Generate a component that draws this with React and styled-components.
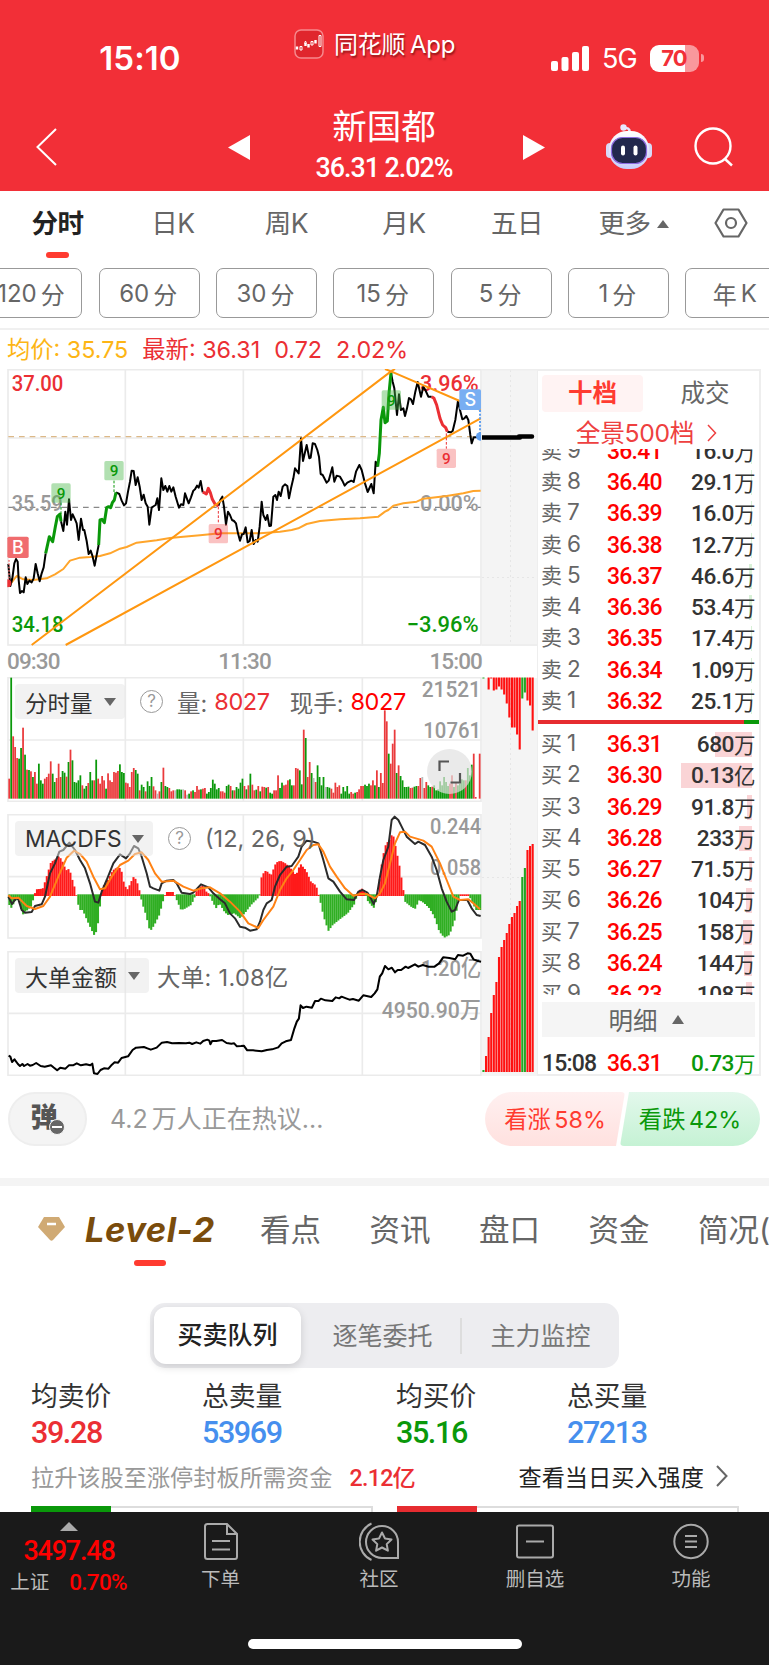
import React from 'react';
import styled, { createGlobalStyle } from 'styled-components';

const GlobalStyle = createGlobalStyle`
    body {
        margin: 0;
        background: #fff;
    }
    * {
        box-sizing: border-box;
    }
`

const ui = `Inter, "Noto Sans CJK SC", sans-serif`;
const digits = `Roboto, "Noto Sans CJK SC", sans-serif`;

// Data

const periods = [
    {title: "分时", active: true},
    {title: "日K"},
    {title: "周K"},
    {title: "月K"},
    {title: "五日"},
    {title: "更多", arrow: true}
]

const intervals = [["120", "分"], ["60", "分"], ["30", "分"], ["15", "分"], ["5", "分"], ["1", "分"], ["年", "K"]];

const sellOrders = [
    ["9", "36.41", "16.0万", 1],
    ["8", "36.40", "29.1万", 1],
    ["7", "36.39", "16.0万", 1],
    ["6", "36.38", "12.7万", 1],
    ["5", "36.37", "46.6万", 3],
    ["4", "36.36", "53.4万", 3],
    ["3", "36.35", "17.4万", 1],
    ["2", "36.34", "1.09万", 1],
    ["1", "36.32", "25.1万", 1]
]

const buyOrders = [
    ["1", "36.31", "680万", 37],
    ["2", "36.30", "0.13亿", 71],
    ["3", "36.29", "91.8万", 5],
    ["4", "36.28", "233万", 13],
    ["5", "36.27", "71.5万", 3],
    ["6", "36.26", "104万", 6],
    ["7", "36.25", "158万", 9],
    ["8", "36.24", "144万", 8],
    ["9", "36.23", "108万", 6]
]

const stats = [
    {title: "均卖价", value: "39.28", color: "#eb2f34"},
    {title: "总卖量", value: "53969", color: "#468fee"},
    {title: "均买价", value: "35.16", color: "#0a980a"},
    {title: "总买量", value: "27213", color: "#468fee"}
]

// price line is split where its color changes
const priceLine = [
    {color: "#000", points: "25,612 31,678 37,655 43,610 48,597 53,605 56,660 60,699 66,693 71,697 77,652 82,672 88,662 95,667 101,655 107,612 113,640 119,664 125,640 131,622 137,580"},
    {color: "#000", points: "183,484 190,513 196,455 201,494 207,418 213,480 218,463 225,478 230,490 236,540 243,476 249,510 253,510 260,543 266,582 272,572 278,590 284,617 290,585 296,555"},
    {color: "#000", points: "348,397 358,402 365,422 372,436 378,430 384,395 390,365 395,332 401,333 407,375 413,352 419,380 425,420 431,404 437,430 443,440 448,494 455,443 462,438 467,435 472,415 477,450 484,355 490,390 496,378 502,395 508,378 514,395 520,382 527,410 537,443 543,433 550,435 555,400 566,430 573,412 580,392 585,388 591,377 596,383 602,363 608,397"},
    {color: "#000", points: "655,438 661,420 667,410 672,440 678,494 684,455 690,465 696,480 702,483 708,490 714,520 720,542 726,523 731,522 737,502 743,547 749,543 755,510 761,552 767,540 773,545 779,500 785,425 790,465 797,480 802,465 808,498 813,497 820,410 826,405 831,420 836,395 842,408 848,380 855,373 862,378 867,415 873,385 880,355 885,325 896,340 903,235 909,303 920,255 928,295 932,293 938,250 945,252 952,270 957,290 962,342 968,345 980,368 986,362 997,322 1003,365 1010,347 1020,350 1027,362 1034,377 1042,368 1054,362 1061,366 1068,335 1078,315 1085,330 1095,370 1103,396 1114,372 1121,400 1127,305 1133,320"},
    {color: "#000", points: "1173,38 1178,65 1183,85 1191,165 1197,103 1203,150 1210,145 1215,168 1221,145 1227,114 1233,118 1239,132 1246,95 1253,66 1263,110 1270,80 1276,90 1285,110 1295,110"},
    {color: "#000", points: "1342,215 1352,217 1358,213 1366,180 1374,122 1380,150 1387,178 1393,175 1399,168 1405,180 1411,225 1415,250 1421,232 1427,232 1436,230"},
    {color: "#0a980a", points: "137,580 148,530 158,545 166,500 172,470 180,462 183,484"},
    {color: "#0a980a", points: "296,555 300,480 306,478 313,488 320,443 326,440 332,443 337,428 343,420 348,397"},
    {color: "#0a980a", points: "1133,320 1138,280 1143,180 1150,142 1155,188 1162,183 1167,100 1173,38"},
    {color: "#eb2f34", points: "608,397 613,398 619,402 625,385 631,398 637,418 645,432 655,438"},
    {color: "#eb2f34", points: "1295,110 1302,115 1310,135 1320,175 1328,195 1337,203 1342,215"}
]

const averageLine = "25,680 50,648 70,658 100,660 140,655 165,643 190,627 210,602 240,593 270,591 300,588 330,580 360,566 380,561 410,548 470,541 510,534 550,530 600,526 660,520 780,520 840,515 875,510 895,505 920,492 960,483 1020,478 1080,475 1135,470 1155,455 1165,450 1180,437 1210,430 1250,425 1270,416 1340,408 1390,400 1420,393 1442,392";

// one entry a minute: r - up, g - down, n - unchanged
const volumes = "r60 g363 r187 r155 r122 g120 g152 r213 g132 r87 g86 r82 g65 r80 r45 g105 g55 g45 r60 r65 r75 r112 g75 g50 r62 r105 r65 g83 g78 r66 g110 r147 g115 g50 g48 g55 g70 r40 g30 g38 r47 g80 g55 r55 g117 r60 r45 r68 r55 g30 r76 r55 r50 r80 r78 r83 g103 g80 g77 r48 r46 r35 r80 r92 g86 g75 r25 g42 g35 r22 g52 g38 g65 r37 r25 n15 r22 g50 r93 g38 g35 r32 r22 r25 n25 g28 g28 g27 n28 r25 n12 g15 r22 g25 r20 r38 r27 g28 r30 r32 g15 g20 g32 g57 g45 g28 g32 r22 r22 r18 g38 g42 r38 g25 r25 g35 g30 g48 g60 r38 g28 r40 g75 r42 r25 g27 r38 g22 r36 r35 g33 r35 g18 g15 r25 r25 r70 g32 g48 r40 r42 r55 g58 g40 r40 r92 r90 g85 g43 r207 g182 r65 r110 g77 n62 r50 g100 g65 g40 g65 n35 g35 g33 r30 r18 r48 r35 r40 g15 g35 g22 g38 g15 r20 r15 g18 r20 r28 r38 r38 g42 g38 g45 r40 r55 g40 r85 g35 r77 r47 r265 r232 g135 r105 r165 r207 g77 r100 g68 g55 g35 g35 g36 r32 r33 g36 g38 r38 r62 n65 r32 r50 g40 g35 r36 g40 g25 g28 g52 g40 g65 g50 g38 r45 r70 g35 r48 g40 g45 g58 g55 r55 g92 g70 g102 r135 r5 n0 r135".split(" ");
const volumeColors = {r: "#ea3a3c", g: "#0a980a", n: "#bbb"};

const macdShape = [
    [25, -30], [32, -40], [40, -20], [48, -15], [52, 10], [55, -20], [65, -60], [72, -50], [80, -45], [90, -35], [100, -3], [104, 18], [125, 20],
    [135, 50], [150, 100], [165, 110], [175, 118], [185, 100], [195, 75], [205, 80], [213, 50], [222, 20], [228, -10], [235, -45], [245, -45],
    [260, -80], [275, -112], [282, -125], [292, -80], [300, -5], [304, 25], [320, 45], [335, 75], [350, 85], [360, 80], [370, 30], [380, 18],
    [390, 40], [399, 58], [408, 40], [418, 5], [422, -20], [435, -60], [447, -110], [460, -90], [475, -60], [487, -15], [492, 1], [497, 10],
    [518, 10], [525, -10], [540, -45], [550, -42], [570, -30], [580, -10], [583, 5], [590, 20], [603, 30], [615, 12], [625, 4], [630, -10],
    [645, -40], [655, -25], [670, -50], [680, -60], [700, -55], [718, -70], [735, -50], [750, -30], [770, -10], [777, 1], [782, 60], [795, 75],
    [810, 60], [825, 98], [838, 104], [855, 95], [870, 80], [885, 60], [898, 95], [902, 90], [915, 75], [930, 40], [945, 30], [952, 5],
    [958, -20], [968, -65], [982, -108], [995, -90], [1020, -70], [1040, -55], [1062, -25], [1068, 1], [1080, 22], [1090, 15], [1098, -15],
    [1110, -30], [1120, -40], [1128, -5], [1133, 25], [1145, 115], [1155, 155], [1165, 165], [1175, 188], [1183, 150], [1195, 90], [1205, 30],
    [1212, -20], [1230, -35], [1242, -42], [1255, -15], [1270, -25], [1285, -40], [1300, -65], [1315, -110], [1330, -128], [1345, -120],
    [1360, -80], [1370, -30], [1377, 3], [1403, 3], [1410, -15], [1425, -45], [1440, -45]
]

const difLine = "25,680 36,702 48,685 55,688 65,720 75,728 95,726 105,708 125,703 135,680 150,610 165,580 178,545 190,540 208,518 225,540 240,570 255,595 270,640 285,695 295,698 305,665 320,630 340,580 360,553 378,565 390,550 402,528 415,535 425,560 440,610 450,650 460,655 478,662 485,640 500,632 520,630 530,640 545,668 570,672 580,668 603,643 625,652 640,670 660,688 675,700 690,730 705,745 720,770 735,773 750,782 770,778 780,755 790,720 800,700 815,690 825,650 840,615 860,590 875,588 895,560 905,530 920,512 940,515 955,520 970,570 985,625 1000,635 1020,665 1040,688 1062,690 1075,665 1088,660 1102,668 1110,680 1121,702 1130,680 1140,620 1150,570 1165,530 1175,450 1184,440 1195,450 1205,470 1220,500 1245,522 1255,515 1275,525 1295,560 1310,600 1325,655 1340,695 1355,725 1365,720 1377,690 1402,690 1415,715 1430,735 1442,738";
const deaLine = "25,676 35,685 55,683 80,708 105,717 130,708 150,680 175,620 200,563 222,542 240,552 260,575 280,620 300,658 315,655 335,620 360,585 385,572 405,552 425,547 445,570 465,610 485,635 520,632 550,650 580,662 605,655 630,652 660,670 690,695 720,725 745,760 775,774 790,750 820,710 840,660 860,625 880,600 900,570 920,540 940,525 955,523 970,545 990,590 1010,620 1035,655 1060,677 1080,672 1100,672 1125,685 1140,670 1155,640 1170,580 1185,520 1200,487 1215,485 1230,500 1270,512 1295,530 1320,580 1340,630 1360,680 1380,690 1405,688 1420,700 1440,718";
const bigOrderLine = "25,347 30,350 35,366 42,358 52,372 58,378 65,372 70,378 80,372 87,377 95,375 105,369 118,378 130,380 148,376 155,382 166,391 175,383 190,386 200,376 212,376 223,370 235,376 250,373 262,376 268,371 273,400 283,402 292,390 302,385 315,386 325,374 333,367 343,368 353,354 372,349 385,330 395,323 418,321 428,325 438,329 455,323 470,308 485,306 500,310 520,309 540,310 550,308 558,312 570,307 582,311 590,303 602,299 608,302 611,313 616,303 628,303 645,300 658,309 672,311 680,310 688,319 700,318 708,317 718,331 735,331 760,334 775,330 790,328 808,322 818,310 830,304 845,300 855,265 862,245 868,236 873,196 880,204 890,200 906,203 915,183 925,183 932,176 945,181 965,183 975,172 985,175 992,170 1005,175 1015,179 1025,177 1042,182 1055,166 1078,171 1088,160 1096,148 1103,110 1110,100 1118,78 1128,88 1138,83 1147,97 1155,90 1165,90 1178,80 1185,84 1205,73 1215,80 1228,75 1245,80 1262,80 1275,70 1287,52 1305,54 1322,58 1330,45 1345,47 1358,40 1366,41 1375,58 1385,62 1397,65";

// closing auction, lengths of the hanging and of the standing bars
const auctionTop = [1, 0, 12, 1, 13, 12, 9, 12, 17, 26, 40, 50, 50, 57, 72, 21, 15, 23, 28, 53];
const auctionBottom = [2, 16, 35, 59, 77, 90, 115, 125, 132, 139, 148, 155, 159, 166, 171, 195, 204, 222, 226, 228];

// Layout

const Screen = styled.div`
    width: 769px;
    height: 1665px;
    overflow: hidden;
    background: #fff;
    font-family: ${ui};
    color: #333;
`
const Header = styled.header`
    height: 191px;
    background: #f22f37;
    color: #fff;
`
const StatusBar = styled.div`
    display: grid;
    grid-template-columns: 280px 242px 1fr;
    height: 103px;
    padding-top: 12px;
`
const Clock = styled.div`
    line-height: 92px;
    text-align: center;
    font-size: 33px;
    font-weight: 600;
    letter-spacing: .1px;
`
const AppBadge = styled.div`
    display: flex;
    align-items: center;
    height: 64px;
    gap: 10px;
    padding-left: 14px;
    font-size: 24px;
    letter-spacing: -.3px;
    white-space: nowrap;
    text-shadow: 1px 2px 2px rgba(80, 0, 0, .6);
`
const AppName = styled.div`
    display: flex;
    gap: 5px;
    line-height: 30px;
    padding-top: 2px;
`
const StatusIcons = styled.div`
    display: flex;
    align-items: center;
    height: 92px;
    padding-left: 29px;
    font-size: 27px;
    letter-spacing: -1px;
`
const NetworkType = styled.span`
    width: 48px;
    margin: 1px 0 0 13px;
`
const Battery = styled.div`
    width: 49px;
    height: 27px;
    line-height: 27px;
    padding-right: 1px;
    border-radius: 9px;
    background: linear-gradient(to right, #fff 35px, #f9989c 35px);
    color: #f22f37;
    font-size: 22px;
    font-weight: 700;
    text-align: center;
`
const BatteryNub = styled.div`
    width: 3px;
    height: 8px;
    margin-left: 2px;
    border-radius: 0 3px 3px 0;
    background: #f9989c;
`
const NavBar = styled.div`
    display: grid;
    grid-template-columns: 192px 22px 273px 83px 88px 44px;
    align-items: center;
    height: 88px;
    padding-left: 36px;

    svg {
        display: block;
    }
`
const StockTitle = styled.div`
    padding: 1px 5px 0 0;
    text-align: center;
    line-height: 42px;
    font-size: 34.5px;
`
const StockQuote = styled.div`
    margin-top: -1px;
    font-family: ${digits};
    font-size: 26.8px;
    font-weight: 500;
    letter-spacing: -1px;
    line-height: 42px;
`

const PeriodTabs = styled.div`
    display: grid;
    grid-template-columns: 115px 116px 111px 124px 102px 131px 63px;
    height: 77px;
    padding-top: 4px;
`
const PeriodTab = styled.div`
    display: flex;
    flex-direction: column;
    align-items: center;
    line-height: 57px;
    font-size: 26.5px;
    font-weight: ${props => props.$active ? 700 : 400};
    color: ${props => props.$active ? "#222" : "#666"};
    letter-spacing: -.5px;

    &::after {
        content: "";
        width: 23px;
        height: 6px;
        border-radius: 3px;
        background: ${props => props.$active ? "#ff3b30" : "transparent"};
    }
`
const TabRow = styled.div`
    display: flex;
    align-items: center;
    gap: 6px;
`
const Triangle = styled.i`
    width: 0;
    height: 0;
    border: ${props => props.$half || 6}px solid transparent;
    border-top: ${props => props.$down ? `8px solid ${props.$color || "#666"}` : "0"};
    border-bottom: ${props => props.$down ? "0" : `${props.$tall || 8}px solid ${props.$color || "#666"}`};
`
const SettingsButton = styled.div`
    display: flex;
    justify-content: center;
    height: 56px;
    align-items: center;
`
const IntervalRow = styled.div`
    display: flex;
    gap: 16.3px;
    height: 62px;
    margin-left: -18.6px;
    border-bottom: 2px solid #f0f0f0;
`
const IntervalChip = styled.div`
    display: flex;
    justify-content: center;
    align-items: center;
    gap: 4px;
    flex: 0 0 101px;
    height: 50px;
    padding-right: 2px;
    border: 1.5px solid #999;
    border-radius: 7px;
    font-size: 24px;
    color: #666;
`
const QuoteRow = styled.div`
    display: flex;
    height: 39px;
    padding-left: 7px;
    line-height: 39px;
    font-size: 23.3px;

    span {
        margin-right: 14px;
        color: #eb2f34;
    }
    span:first-child {
        color: #fdb515;
    }
`

const ChartBoard = styled.section`
    display: grid;
    grid-template-columns: 475px 55px 224px;
    height: 707px;
    margin-left: 7px;
`
const ChartColumn = styled.div`
    display: flex;
    flex-direction: column;

    svg {
        display: block;
    }
`
const TimeAxis = styled.div`
    display: flex;
    justify-content: space-between;
    height: 30px;
    line-height: 29px;
    font-family: ${digits};
    font-size: 22.5px;
    font-weight: 500;
    letter-spacing: -.9px;
    color: #999;
`
const Panel = styled.div`
    position: relative;
    height: ${props => props.$height}px;
    margin-bottom: 12px;
`
const PanelHead = styled.div`
    position: absolute;
    top: 7px;
    left: 8px;
    display: flex;
    align-items: center;
    height: 35px;
    font-size: 23.5px;
    color: #666;
    white-space: nowrap;
`
const Selector = styled.div`
    display: flex;
    align-items: center;
    justify-content: space-between;
    width: ${props => props.$width}px;
    height: 35px;
    padding: 0 9px 0 10px;
    border-radius: 4px;
    background: rgba(229, 229, 229, .5);
    color: #333;
    font-size: ${props => props.$size || 22.5}px;
`
const Help = styled.span`
    width: 23px;
    height: 23px;
    line-height: 20px;
    margin-left: 15px;
    border: 1.5px solid #999;
    border-radius: 50%;
    text-align: center;
    font-size: 17px;
    color: #999;
`
const HeadText = styled.span`
    margin-left: ${props => props.$left}px;
    letter-spacing: ${props => props.$spacing || 0}px;
    color: ${props => props.$color || "inherit"};
`
const ExpandButton = styled.div`
    position: absolute;
    right: 10px;
    bottom: 8px;
    width: 45px;
    height: 45px;
    padding: 11px;
    border-radius: 50%;
    background: rgba(225, 225, 225, .7);
`

const OrderBook = styled.div`
    height: 707px;
    border: 2px solid #eee;
    border-left-width: 1px;
`
const BookTabs = styled.div`
    display: grid;
    grid-template-columns: 101px 1fr;
    padding: 4px 0 0 4px;
    text-align: center;
    line-height: 37px;
    font-size: 24.5px;
    color: #666;
`
const BookTab = styled.div`
    border-radius: 4px;
    padding-left: ${props => props.$active ? 0 : 8}px;
    background: ${props => props.$active ? "#fff3f3" : "none"};
    color: ${props => props.$active ? "#ff3b30" : "#666"};
    font-weight: ${props => props.$active ? 700 : 400};
`
const FullDepth = styled.div`
    display: flex;
    justify-content: center;
    align-items: center;
    gap: 13px;
    height: 37px;
    padding: 5px 4px 0 0;
    line-height: 32px;
    font-size: 24.7px;
    letter-spacing: -.3px;
    color: #ee4040;
`
const Orders = styled.div`
    display: flex;
    flex-direction: column;
    justify-content: ${props => props.$side === "sell" ? "flex-end" : "flex-start"};
    height: ${props => props.$side === "sell" ? 271 : 268}px;
    padding: ${props => props.$side === "sell" ? "0 0 3px" : "2px 0 0"};
    overflow: hidden;
`
const Order = styled.div`
    display: grid;
    grid-template-columns: 65px 62px 1fr;
    align-items: center;
    flex: 0 0 31.25px;
    padding: 0 4px;
    font-size: 21px;
    color: #666;
    white-space: nowrap;
`
const OrderLevel = styled.div`
    line-height: 28px;
    margin: -2px 0 0 -1px;

    b {
        margin-left: 5px;
        font-size: 22.5px;
        font-weight: 400;
    }
`
const Price = styled.div`
    font-family: ${digits};
    font-size: 23px;
    font-weight: 500;
    letter-spacing: -.8px;
    color: ${props => props.$color || "#f00"};
`
const Amount = styled(Price)`
    display: flex;
    justify-content: flex-end;
    align-items: center;
    height: 25px;
    font-size: 22.7px;
    letter-spacing: -.5px;
    background: linear-gradient(${props => props.$side === "sell" ? "#d8f1d8, #d8f1d8" : "#fad4d6, #fad4d6"}) right 3px top 0 / ${props => props.$depth || 0}px 100% no-repeat;

    small {
        margin-top: -2px;
        font-size: 21.5px;
        font-weight: 400;
    }
`
const Ratio = styled.div`
    height: 4px;
    margin-bottom: 3px;
    background: linear-gradient(to right, #e62c30 206px, #0a980a 206px);
`
const DetailButton = styled.div`
    display: flex;
    justify-content: center;
    align-items: center;
    gap: 14px;
    height: 35px;
    margin: 7px 4px 13px;
    padding-right: 5px;
    background: #f5f5f5;
    font-size: 24.5px;
    color: #666;
`

const Comments = styled.div`
    display: flex;
    height: 102px;
    padding: 16px 9px 0 8px;
`
const Danmu = styled.div`
    display: flex;
    align-items: center;
    justify-content: center;
    width: 79px;
    height: 54px;
    border: 2px solid #eee;
    border-radius: 27px;
    background: #f4f4f4;
    line-height: 46px;
    font-size: 27px;
    font-weight: 900;
    color: #555;

    span {
        padding-bottom: 2px;
    }
`
const DanmuOff = styled.i`
    width: 16px;
    height: 16px;
    margin: 15px 0 0 -9px;
    padding: 5px 2px;
    border: 1px solid #f4f4f4;
    border-radius: 50%;
    background: #666;

    &::after {
        content: "";
        display: block;
        width: 10px;
        height: 2px;
        margin-top: 1px;
        background: #fff;
    }
`
const CommentHint = styled.div`
    flex: 1;
    padding-left: 23px;
    line-height: 55px;
    font-size: 25px;
    word-spacing: -3px;
    color: #999;
`
const Vote = styled.div`
    width: 140px;
    height: 54px;
    line-height: 55px;
    font-size: 23.3px;
    word-spacing: -3px;
    text-align: center;
    color: ${props => props.$up ? "#ff3b30" : "#0a980a"};
    background: ${props => props.$up ? "linear-gradient(#fff0f0, #ffe1df)" : "linear-gradient(#e3f8ec, #c5f2d4)"};
    border-radius: ${props => props.$up ? "27px 4px 4px 27px" : "4px 27px 27px 4px"};
    clip-path: ${props => props.$up ? "polygon(0 0, 100% 0, calc(100% - 9px) 100%, 0 100%)" : "polygon(9px 0, 100% 0, 100% 100%, 0 100%)"};
    margin-left: ${props => props.$up ? 0 : -5}px;
`

const SectionTabs = styled.nav`
    display: flex;
    height: 125px;
    padding: 14px 0 0 38px;
    border-top: 8px solid #f4f4f4;
    line-height: 60px;
    font-size: 30.5px;
    color: #666;
    white-space: nowrap;

    svg {
        flex: none;
        margin-top: 17px;
    }
`
const SectionTab = styled.div`
    flex: 0 0 109.5px;
`
const LevelTab = styled.div`
    flex: 0 0 175px;
    margin-left: 20px;
    font-size: 34.5px;
    font-style: italic;
    font-weight: 700;
    letter-spacing: .5px;
    color: #7a4c0c;

    &::after {
        content: "";
        display: block;
        width: 32px;
        height: 6px;
        margin-left: 49px;
        border-radius: 3px;
        background: #ff3b30;
    }
`
const Segmented = styled.div`
    display: flex;
    align-items: center;
    width: 469px;
    height: 65px;
    margin-left: 150px;
    padding-left: 4px;
    border-radius: 15px;
    background: #ededf0;
    font-size: 25px;
    color: #777;
`
const Segment = styled.div`
    width: ${props => props.$active ? 147 : 159}px;
    line-height: ${props => props.$active ? 57 : 36}px;
    padding-left: ${props => props.$active || props.$divided ? 0 : 4}px;
    text-align: center;
    border-left: ${props => props.$divided ? "2px solid #ddd" : "none"};
    border-radius: ${props => props.$active ? 12 : 0}px;
    background: ${props => props.$active ? "#fff" : "none"};
    color: ${props => props.$active ? "#222" : "#777"};
    font-weight: ${props => props.$active ? 500 : 400};
    box-shadow: ${props => props.$active ? "0 3px 8px rgba(0, 0, 0, .14)" : "none"};
`
const Stats = styled.div`
    display: grid;
    grid-template-columns: 171px 194px 171px 1fr;
    height: 83px;
    padding: 8px 0 0 31px;
`
const Stat = styled.div`
    line-height: 40px;
    font-size: 26.8px;
`
const StatValue = styled.div`
    margin-top: -3px;
    font-family: ${digits};
    font-size: 30.5px;
    font-weight: 500;
    letter-spacing: -1.4px;
    color: ${props => props.$color};
`
const LimitRow = styled.div`
    display: flex;
    align-items: center;
    height: 54px;
    padding: 0 41px 4px 31px;
    font-size: 23.2px;
    color: #999;
`
const LimitAmount = styled.span`
    flex: 1;
    padding-left: 17px;
    font-family: ${digits};
    font-weight: 500;
    letter-spacing: -.7px;
    color: #eb2f34;
`
const LimitLink = styled.span`
    margin-right: 12px;
    color: #222;
`
const QueueRow = styled.div`
    display: flex;
    gap: 24px;
    height: 7px;
    padding: 1px 0 0 31px;
`
const Queue = styled.div`
    width: 342px;
    border: 2px solid #ddd;
    border-width: 2px 2px 0 0;

    &::before {
        content: "";
        display: block;
        width: 80px;
        height: 6px;
        margin-top: -2px;
        background: ${props => props.$color};
    }
`

const BottomBar = styled.footer`
    display: grid;
    grid-template-columns: 138px 165px 152px 160px 152px;
    height: 153px;
    background: #1a1a1a;
    color: #bbb;
`
const IndexCell = styled.div`
    display: flex;
    flex-direction: column;
    align-items: center;
    padding-top: 10px;
    font-family: ${digits};
`
const IndexValue = styled.div`
    line-height: 41px;
    font-size: 27px;
    font-weight: 500;
    letter-spacing: -1.2px;
    color: #f00;
`
const IndexChange = styled.div`
    display: flex;
    gap: 20px;
    padding-right: 1px;
    line-height: 21px;
    font-size: 19.5px;

    b {
        font-size: 22.5px;
        font-weight: 500;
        letter-spacing: -.7px;
        color: #f00;
    }
`
const BarItem = styled.div`
    display: flex;
    flex-direction: column;
    align-items: center;
    padding-top: 9px;
    font-size: 19.5px;
    line-height: 33px;

    svg {
        height: 42px;
    }
`
const HomeIndicator = styled.div`
    grid-column: 1 / -1;
    width: 274px;
    height: 10px;
    margin: 26px 0 0 248px;
    border-radius: 5px;
    background: #fff;
`

// Charts

const gridColumns = [376, 730, 1087];

const Grid = ({top, bottom, rows}) => (
    <g stroke="#ebebeb" strokeWidth="5" fill="none">
        <rect x="24" y={top + 2} width="1419" height={bottom - top - 4}/>
        {gridColumns.map(x => <path key={x} d={`M${x} ${top}V${bottom}`}/>)}
        {rows.map(y => <path key={y} d={`M22 ${y}H1444`}/>)}
    </g>
);

const ScaleText = ({x, y, width, color = "#999", end, children}) => (
    <text
        x={x} y={y} fill={color} fontFamily={digits} fontWeight="500" fontSize="67"
        textLength={width} lengthAdjust="spacingAndGlyphs" textAnchor={end ? "end" : "start"}
    >
        {children}
    </text>
);

const Signal = ({x, y, color, fill, line}) => (
    <g>
        {line && <path d={`M${x} ${line[0]}V${line[1]}`} stroke={color} strokeWidth="3" strokeDasharray="8 5"/>}
        <rect x={x - 29} y={y - 29} width="58" height="58" rx="5" fill={fill}/>
        <text x={x} y={y + 17} textAnchor="middle" fontFamily={digits} fontSize="46" fontWeight="500" fill={color}>9</text>
    </g>
);

const PriceChart = () => (
    <svg width="475" height="278" viewBox="21 27 1425 834">
        <Grid top={27} bottom={857} rows={[234, 651]}/>
        <path d="M25 230H1442" stroke="#dcb887" strokeWidth="4" strokeDasharray="17 15"/>
        <path d="M25 442H1442" stroke="#888" strokeWidth="4" strokeDasharray="17 15"/>
        <ScaleText x={35} y={94} width={155} color="#eb2f34">37.00</ScaleText>
        <ScaleText x={35} y={453} width={153}>35.59</ScaleText>
        <ScaleText x={35} y={815} width={156} color="#0a980a">34.18</ScaleText>
        <ScaleText x={1436} y={94} width={176} color="#eb2f34" end>3.96%</ScaleText>
        <ScaleText x={1436} y={453} width={176} end>0.00%</ScaleText>
        <ScaleText x={1436} y={815} width={216} color="#0a980a" end>−3.96%</ScaleText>
        <g fill="none" strokeLinejoin="round">
            <polyline points={averageLine} stroke="#ffa52b" strokeWidth="6"/>
            {priceLine.map(part => (
                <polyline key={part.points} points={part.points} stroke={part.color} strokeWidth={part.color === "#000" ? 6 : 9}/>
            ))}
            <path d="M95 855L1173 34L1442 150M197 855L1442 175M1155 27L1173 34L1185 27" stroke="#ff9710" strokeWidth="6"/>
        </g>
        <Signal x={183} y={399} color="#0a980a" fill="rgba(70, 180, 70, .42)" line={[428, 465]}/>
        <Signal x={342} y={332} color="#0a980a" fill="rgba(70, 180, 70, .42)" line={[362, 397]}/>
        <Signal x={1174} y={120} color="#0a980a" fill="rgba(70, 180, 70, .42)"/>
        <Signal x={655} y={521} color="#eb2f34" fill="rgba(240, 80, 80, .35)" line={[440, 492]}/>
        <Signal x={1339} y={295} color="#eb2f34" fill="rgba(240, 80, 80, .35)" line={[220, 266]}/>
        <path d="M27 600V680" stroke="#f06c6e" strokeWidth="4" strokeDasharray="5 5"/>
        <path d="M22 658a12 12 0 0 1 0 24z" fill="#eb2f34"/>
        <rect x="22" y="530" width="64" height="64" rx="5" fill="#f06c6e"/>
        <text x="54" y="582" textAnchor="middle" fontFamily={ui} fontSize="54" fontWeight="500" fill="#fff">B</text>
        <path d="M1440 150V225" stroke="#5f9ff0" strokeWidth="6" strokeDasharray="6 5"/>
        <path d="M1443 216a14 12 0 0 0 0 26z" fill="#5f9ff0"/>
        <rect x="1378" y="88" width="65" height="62" rx="5" fill="#78aef2"/>
        <text x="1411" y="139" textAnchor="middle" fontFamily={ui} fontSize="54" fontWeight="500" fill="#fff">S</text>
    </svg>
);

const VolumeChart = () => (
    <svg width="475" height="125" viewBox="21 21 1425 375">
        <Grid top={21} bottom={396} rows={[210]}/>
        {volumes.map((item, i) => {
            const height = Number(item.slice(1));
            return <rect key={i} x={25 + i * 5.93} y={386 - height} width="5.3" height={height} fill={volumeColors[item[0]]}/>
        })}
        <ScaleText x={1443} y={82} width={178} end>21521</ScaleText>
        <ScaleText x={1443} y={205} width={173} end>10761</ScaleText>
    </svg>
);

const macdAt = x => {
    const next = macdShape.findIndex(point => point[0] >= x);
    if (next < 1) return macdShape[next === 0 ? 0 : macdShape.length - 1][1];
    const [x0, y0] = macdShape[next - 1];
    const [x1, y1] = macdShape[next];
    return y0 + (y1 - y0) * (x - x0) / (x1 - x0);
}

const MacdChart = () => (
    <svg width="475" height="125" viewBox="21 432 1425 375">
        <Grid top={432} bottom={806} rows={[620]}/>
        {Array.from({length: 240}, (_, i) => {
            const x = 25 + i * 5.91;
            const value = macdAt(x);
            return (
                <rect
                    key={i} x={x} width="6.2"
                    y={value > 0 ? 676 - value : 673} height={Math.abs(value) + 2}
                    fill={value > 0 ? "#ff1a1a" : "#2fae22"}
                />
            )
        })}
        <ScaleText x={1443} y={492} width={153} end>0.244</ScaleText>
        <ScaleText x={1443} y={615} width={153} end>0.058</ScaleText>
        <g fill="none" strokeWidth="6" strokeLinejoin="round">
            <polyline points={difLine} stroke="#2b2b2b"/>
            <polyline points={deaLine} stroke="#ff8214"/>
        </g>
    </svg>
);

const BigOrderChart = () => (
    <svg width="475" height="125" viewBox="21 33 1425 375">
        <Grid top={33} bottom={408} rows={[220]}/>
        <ScaleText x={1443} y={109} width={180} end>1.20亿</ScaleText>
        <ScaleText x={1443} y={234} width={298} end>4950.90万</ScaleText>
        <polyline points={bigOrderLine} transform="scale(1.033 1)" fill="none" stroke="#000" strokeWidth="6" strokeLinejoin="round"/>
    </svg>
);

const auctionFill = i => [0, 15, 16].includes(i) ? "#23a523" : "#ff1010";

const AuctionChart = () => (
    <svg width="55" height="707" viewBox="482 369 55 707">
        <path d="M482 369h55v276h-55zM482 678h55v398h-55z" fill="#f4f4f4"/>
        <path d="M510.500 370V645M510.500 678V1072M482 577.500H537M482 877.500H537" stroke="#e6e6e6" strokeDasharray="2 3" fill="none"/>
        <path d="M482 369.500H537M482 645H537" stroke="#eee" strokeWidth="2"/>
        <path d="M482 437.500H520M519 436.500H532" stroke="#000" strokeWidth="4.500" strokeLinecap="round"/>
        {auctionTop.map((height, i) => (
            <rect key={i} x={482.4 + i * 2.59} y="677.500" width="2.100" height={height} fill={auctionFill(i)}/>
        ))}
        {auctionBottom.map((height, i) => (
            <rect key={i} x={482.4 + i * 2.59} y={1072 - height} width="2.100" height={height} fill={auctionFill(i)}/>
        ))}
    </svg>
);

// Icons

const AppLogo = () => (
    <svg width="30" height="30" viewBox="0 0 30 30" fill="none" stroke="#fff">
        <rect x="1" y="1" width="28" height="28" rx="6" fill="#e0262d" stroke="#f6898d" strokeWidth="1.500"/>
        <path d="M3 17.500v3M11.500 14v3M14.500 15v3.500M21.500 11v3.500" strokeWidth="2.400"/>
        <path d="M6 17.500h2v3.500h-2zM10.500 14.500l1-2.500l1 2.500M17 12.500h2v3.500h-2zM25 6.500h2v11h-2z" strokeWidth="1"/>
    </svg>
);

const SignalIcon = () => (
    <svg width="38" height="25" viewBox="0 0 38 25" fill="#fff">
        <rect x="0" y="15" width="7" height="10" rx="2"/>
        <rect x="10.500" y="11" width="7" height="14" rx="2"/>
        <rect x="21" y="6" width="7" height="19" rx="2"/>
        <rect x="31" y="0" width="7" height="25" rx="2"/>
    </svg>
);

const RobotIcon = () => (
    <svg width="46" height="46" viewBox="0 0 46 46">
        <defs>
            <linearGradient id="shell" x1="0" y1="0" x2="0" y2="1">
                <stop offset="0" stopColor="#fff"/>
                <stop offset="1" stopColor="#c9cdfa"/>
            </linearGradient>
        </defs>
        <path d="M22 10c3-3 1-6-2-6" stroke="#e8e8ff" strokeWidth="2.500" fill="none"/>
        <circle cx="17.500" cy="3.500" r="3.200" fill="#e8e8ff"/>
        <rect x="0" y="19" width="8" height="15" rx="4" fill="#d8daf8"/>
        <rect x="38" y="19" width="8" height="15" rx="4" fill="#d8daf8"/>
        <rect x="3" y="7" width="40" height="38" rx="18" fill="url(#shell)"/>
        <rect x="5.500" y="13.500" width="35" height="26" rx="11" fill="#22284d" stroke="#8c6ce0" strokeWidth="1.200"/>
        <rect x="15" y="21.500" width="4" height="10" rx="2" fill="#fff"/>
        <rect x="27.500" y="21.500" width="4" height="10" rx="2" fill="#fff"/>
    </svg>
);

const ExpandIcon = () => (
    <svg width="24" height="24" viewBox="0 0 24 24" fill="none" stroke="#555" strokeWidth="2.200">
        <path d="M1.500 11V1.500H11M22 13v9.500h-9.500"/>
    </svg>
);

const Chevron = ({width, height, color, strokeWidth = 2, left}) => (
    <svg width={width} height={height} viewBox={`0 0 ${width} ${height}`} fill="none" stroke={color} strokeWidth={strokeWidth}>
        <path d={left ? `M${width - 1} 1L1.500 ${height / 2}L${width - 1} ${height - 1}` : `M1 1L${width - 1.5} ${height / 2}L1 ${height - 1}`}/>
    </svg>
);

const OrderIcon = () => (
    <svg width="34" viewBox="0 0 34 42" fill="none" stroke="#aaa" strokeWidth="2">
        <path d="M23 3H3.500Q1 3 1 5.500V35.500Q1 38 3.500 38H31Q33 38 33 35.500V13ZM23 3V13H33M8 20H26M8 28.500H26"/>
    </svg>
);

const CommunityIcon = () => (
    <svg width="40" viewBox="0 0 40 42" fill="none" stroke="#aaa" strokeWidth="2">
        <path d="M39 37H23A16 16 0 1 1 39 21ZM12.500 2.500A20 20 0 0 0 12.500 39"/>
        <path d="M23 11.500l3 6 6.500 1-4.800 4.600 1.200 6.600-5.900-3.200-5.900 3.200 1.200-6.600-4.800-4.600 6.500-1z" strokeLinejoin="round"/>
    </svg>
);

const RemoveIcon = () => (
    <svg width="38" viewBox="0 0 38 42" fill="none" stroke="#aaa" strokeWidth="2">
        <rect x="1" y="4.500" width="36" height="32" rx="2"/>
        <path d="M10 20.500H28"/>
    </svg>
);

const MenuIcon = () => (
    <svg width="36" viewBox="0 0 36 42" fill="none" stroke="#aaa" strokeWidth="2">
        <circle cx="18" cy="20.500" r="16.700"/>
        <path d="M12 15H24M12 20.500H24M12 26H24"/>
    </svg>
);

const OrderRow = ({side, level, price, amount, depth}) => (
    <Order>
        <OrderLevel>{side === "sell" ? "卖" : "买"}<b>{level}</b></OrderLevel>
        <Price>{price}</Price>
        <Amount $color="#333" $side={side} $depth={depth}>
            {amount.slice(0, -1)}<small>{amount.slice(-1)}</small>
        </Amount>
    </Order>
);

const App = () => {
    return (
        <Screen>
            <GlobalStyle/>
            <Header>
                <StatusBar>
                    <Clock>15:10</Clock>
                    <AppBadge>
                        <AppLogo/>
                        <AppName><span>同花顺</span><span>App</span></AppName>
                    </AppBadge>
                    <StatusIcons>
                        <SignalIcon/>
                        <NetworkType>5G</NetworkType>
                        <Battery>70</Battery>
                        <BatteryNub/>
                    </StatusIcons>
                </StatusBar>
                <NavBar>
                    <Chevron width={21} height={38} color="#fff" left/>
                    <svg width="22" height="25" viewBox="0 0 22 25"><path d="M22 0V25L0 12.500Z" fill="#fff"/></svg>
                    <StockTitle>
                        新国都
                        <StockQuote>36.31 2.02%</StockQuote>
                    </StockTitle>
                    <svg width="22" height="25" viewBox="0 0 22 25"><path d="M0 0L22 12.500L0 25Z" fill="#fff"/></svg>
                    <RobotIcon/>
                    <svg width="40" height="40" viewBox="0 0 40 40" fill="none" stroke="#fff" strokeWidth="2.400">
                        <circle cx="19" cy="19" r="17.500"/>
                        <path d="M31 32l7 6.500"/>
                    </svg>
                </NavBar>
            </Header>

            <PeriodTabs>
                {periods.map(period => (
                    <PeriodTab key={period.title} $active={period.active}>
                        <TabRow>{period.title}{period.arrow && <Triangle/>}</TabRow>
                    </PeriodTab>
                ))}
                <SettingsButton>
                    <svg width="34" height="30" viewBox="0 0 34 30" fill="none" stroke="#666" strokeWidth="2.200">
                        <path d="M9.500 1.500H24.500L32.500 15L24.500 28.500H9.500L1.500 15Z" strokeLinejoin="round"/>
                        <circle cx="17" cy="15" r="5"/>
                    </svg>
                </SettingsButton>
            </PeriodTabs>
            <IntervalRow>
                {intervals.map(([a, b]) => <IntervalChip key={a}><span>{a}</span><span>{b}</span></IntervalChip>)}
            </IntervalRow>
            <QuoteRow>
                <span>均价: 35.75</span>
                <span>最新: 36.31</span>
                <span>0.72</span>
                <span>2.02%</span>
            </QuoteRow>

            <ChartBoard>
                <ChartColumn>
                    <PriceChart/>
                    <TimeAxis>
                        <span>09:30</span>
                        <span>11:30</span>
                        <span>15:00</span>
                    </TimeAxis>
                    <Panel $height={125}>
                        <VolumeChart/>
                        <PanelHead>
                            <Selector $width={110}>分时量<Triangle $down/></Selector>
                            <Help>?</Help>
                            <HeadText $left={14}>量:</HeadText>
                            <HeadText $left={7} $color="#eb2f34" $spacing={-.4}>8027</HeadText>
                            <HeadText $left={20}>现手:</HeadText>
                            <HeadText $left={7} $color="#f00" $spacing={-.4}>8027</HeadText>
                        </PanelHead>
                        <ExpandButton><ExpandIcon/></ExpandButton>
                    </Panel>
                    <Panel $height={125}>
                        <MacdChart/>
                        <PanelHead>
                            <Selector $width={138} $size={22.8}>MACDFS<Triangle $down/></Selector>
                            <Help>?</Help>
                            <HeadText $left={14}>(12, 26, 9)</HeadText>
                        </PanelHead>
                    </Panel>
                    <Panel $height={125}>
                        <BigOrderChart/>
                        <PanelHead>
                            <Selector $width={134} $size={23}>大单金额<Triangle $down/></Selector>
                            <HeadText $left={8} $spacing={.3}>大单: 1.08亿</HeadText>
                        </PanelHead>
                    </Panel>
                </ChartColumn>
                <AuctionChart/>
                <OrderBook>
                    <BookTabs>
                        <BookTab $active>十档</BookTab>
                        <BookTab>成交</BookTab>
                    </BookTabs>
                    <FullDepth>全景500档<Chevron width={10} height={18} color="#ee4040" strokeWidth={1.5}/></FullDepth>
                    <Orders $side="sell">
                        {sellOrders.map(([level, price, amount, depth]) => (
                            <OrderRow key={level} side="sell" level={level} price={price} amount={amount} depth={depth}/>
                        ))}
                    </Orders>
                    <Ratio/>
                    <Orders $side="buy">
                        {buyOrders.map(([level, price, amount, depth]) => (
                            <OrderRow key={level} side="buy" level={level} price={price} amount={amount} depth={depth}/>
                        ))}
                    </Orders>
                    <DetailButton>明细<Triangle $tall={9}/></DetailButton>
                    <Order>
                        <Price $color="#333">15:08</Price>
                        <Price>36.31</Price>
                        <Amount $color="#0a980a">0.73<small>万</small></Amount>
                    </Order>
                </OrderBook>
            </ChartBoard>

            <Comments>
                <Danmu><span>弹</span><DanmuOff/></Danmu>
                <CommentHint>4.2 万人正在热议...</CommentHint>
                <Vote $up>看涨 58%</Vote>
                <Vote>看跌 42%</Vote>
            </Comments>

            <SectionTabs>
                <svg width="27" height="24" viewBox="0 0 27 24">
                    <path d="M6 0H21L27 10L15 23Q13.500 24.500 12 23L0 10Z" fill="#d0aa74"/>
                    <path d="M9 7H18" stroke="#fff" strokeWidth="2.500"/>
                </svg>
                <LevelTab>Level-2</LevelTab>
                <SectionTab>看点</SectionTab>
                <SectionTab>资讯</SectionTab>
                <SectionTab>盘口</SectionTab>
                <SectionTab>资金</SectionTab>
                <SectionTab>简况(F10)</SectionTab>
            </SectionTabs>
            <Segmented>
                <Segment $active>买卖队列</Segment>
                <Segment>逐笔委托</Segment>
                <Segment $divided>主力监控</Segment>
            </Segmented>
            <Stats>
                {stats.map(stat => (
                    <Stat key={stat.title}>
                        {stat.title}
                        <StatValue $color={stat.color}>{stat.value}</StatValue>
                    </Stat>
                ))}
            </Stats>
            <LimitRow>
                拉升该股至涨停封板所需资金
                <LimitAmount>2.12亿</LimitAmount>
                <LimitLink>查看当日买入强度</LimitLink>
                <Chevron width={12} height={22} color="#666"/>
            </LimitRow>
            <QueueRow>
                <Queue $color="#0a980a"/>
                <Queue $color="#e62c30"/>
            </QueueRow>

            <BottomBar>
                <IndexCell>
                    <Triangle $half={9} $tall={9} $color="#aaa"/>
                    <IndexValue>3497.48</IndexValue>
                    <IndexChange>上证<b>0.70%</b></IndexChange>
                </IndexCell>
                <BarItem><OrderIcon/>下单</BarItem>
                <BarItem><CommunityIcon/>社区</BarItem>
                <BarItem><RemoveIcon/>删自选</BarItem>
                <BarItem><MenuIcon/>功能</BarItem>
                <HomeIndicator/>
            </BottomBar>
        </Screen>
    );
};

export default App;
